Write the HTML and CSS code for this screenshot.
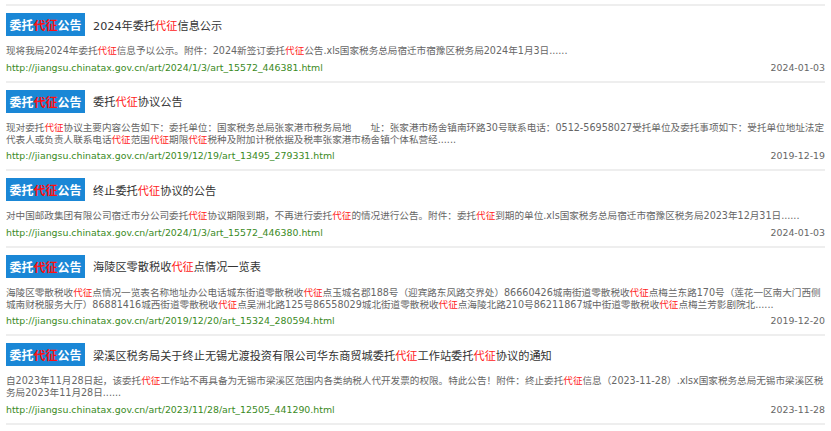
FILE: index.html
```html
<!DOCTYPE html>
<html lang="zh-CN">
<head>
    <meta charset="UTF-8">
    <title>委托代征公告</title>
    <link rel="stylesheet" href="styles.css">
</head>
<body>
    <ul class="result-list">
        <li class="result-item">
            <div class="result-head">
                <span class="tag">委托<em>代征</em>公告</span>
                <a class="result-title" href="#">2024年委托<em>代征</em>信息公示</a>
            </div>
            <p class="result-desc">现将我局2024年委托<em>代征</em>信息予以公示。附件：2024新签订委托<em>代征</em>公告.xls国家税务总局宿迁市宿豫区税务局2024年1月3日......</p>
            <div class="result-foot">
                <a class="result-url" href="#">http://jiangsu.chinatax.gov.cn/art/2024/1/3/art_15572_446381.html</a>
                <span class="result-date">2024-01-03</span>
            </div>
        </li>
        <li class="result-item">
            <div class="result-head">
                <span class="tag">委托<em>代征</em>公告</span>
                <a class="result-title" href="#">委托<em>代征</em>协议公告</a>
            </div>
            <p class="result-desc">现对委托<em>代征</em>协议主要内容公告如下：委托单位：国家税务总局张家港市税务局地&#12288;&#12288;址：张家港市杨舍镇南环路30号联系电话：0512-56958027受托单位及委托事项如下：受托单位地址法定代表人或负责人联系电话<em>代征</em>范围<em>代征</em>期限<em>代征</em>税种及附加计税依据及税率张家港市杨舍镇个体私营经......</p>
            <div class="result-foot">
                <a class="result-url" href="#">http://jiangsu.chinatax.gov.cn/art/2019/12/19/art_13495_279331.html</a>
                <span class="result-date">2019-12-19</span>
            </div>
        </li>
        <li class="result-item">
            <div class="result-head">
                <span class="tag">委托<em>代征</em>公告</span>
                <a class="result-title" href="#">终止委托<em>代征</em>协议的公告</a>
            </div>
            <p class="result-desc">对中国邮政集团有限公司宿迁市分公司委托<em>代征</em>协议期限到期，不再进行委托<em>代征</em>的情况进行公告。附件：委托<em>代征</em>到期的单位.xls国家税务总局宿迁市宿豫区税务局2023年12月31日......</p>
            <div class="result-foot">
                <a class="result-url" href="#">http://jiangsu.chinatax.gov.cn/art/2024/1/3/art_15572_446380.html</a>
                <span class="result-date">2024-01-03</span>
            </div>
        </li>
        <li class="result-item">
            <div class="result-head">
                <span class="tag">委托<em>代征</em>公告</span>
                <a class="result-title" href="#">海陵区零散税收<em>代征</em>点情况一览表</a>
            </div>
            <p class="result-desc">海陵区零散税收<em>代征</em>点情况一览表名称地址办公电话城东街道零散税收<em>代征</em>点玉城名郡188号（迎宾路东风路交界处）86660426城南街道零散税收<em>代征</em>点梅兰东路170号（莲花一区南大门西侧城南财税服务大厅）86881416城西街道零散税收<em>代征</em>点吴洲北路125号86558029城北街道零散税收<em>代征</em>点海陵北路210号86211867城中街道零散税收<em>代征</em>点梅兰芳影剧院北......</p>
            <div class="result-foot">
                <a class="result-url" href="#">http://jiangsu.chinatax.gov.cn/art/2019/12/20/art_15324_280594.html</a>
                <span class="result-date">2019-12-20</span>
            </div>
        </li>
        <li class="result-item">
            <div class="result-head">
                <span class="tag">委托<em>代征</em>公告</span>
                <a class="result-title" href="#">梁溪区税务局关于终止无锡尤渡投资有限公司华东商贸城委托<em>代征</em>工作站委托<em>代征</em>协议的通知</a>
            </div>
            <p class="result-desc">自2023年11月28日起，该委托<em>代征</em>工作站不再具备为无锡市梁溪区范围内各类纳税人代开发票的权限。特此公告！附件：终止委托<em>代征</em>信息（2023-11-28）.xlsx国家税务总局无锡市梁溪区税务局2023年11月28日......</p>
            <div class="result-foot">
                <a class="result-url" href="#">http://jiangsu.chinatax.gov.cn/art/2023/11/28/art_12505_441290.html</a>
                <span class="result-date">2023-11-28</span>
            </div>
        </li>
    </ul>
</body>
</html>
```

FILE: styles.css
```css
body {
    margin: 0;
    padding: 0;
    background-color: #fff;
    font-family: "DejaVu Sans", "Noto Sans CJK SC", sans-serif;
}

em {
    font-style: normal;
    color: #f22;
}

.result-list {
    list-style: none;
    margin: 4px 0 0 6px;
    padding: 0;
    width: 819px;
}

.result-item {
    border-top: 2px solid #eeeeee;
    padding: 7px 0 7px;
}

.result-item:last-child {
    border-bottom: 2px solid #eeeeee;
}

.result-head {
    display: flex;
    align-items: center;
    gap: 8px;
    height: 23px;
}

.tag {
    background-color: #1a87d6;
    color: #fff;
    font-family: "Noto Sans CJK SC", sans-serif;
    font-size: 12px;
    font-weight: bold;
    height: 23px;
    line-height: 23px;
    padding: 0 3.5px;
}

.tag em {
    color: #ff1010;
}

.result-title {
    font-size: 11.2px;
    color: #333;
    text-decoration: none;
}

.result-desc {
    margin: 9px 0 0;
    font-size: 9.6px;
    line-height: 12px;
    color: #666;
}

.result-foot {
    display: flex;
    justify-content: space-between;
    margin-top: 4.5px;
    font-size: 9.4px;
    line-height: 12px;
}

.result-url {
    color: #3a8a24;
    text-decoration: none;
}

.result-date {
    color: #666;
}
```
